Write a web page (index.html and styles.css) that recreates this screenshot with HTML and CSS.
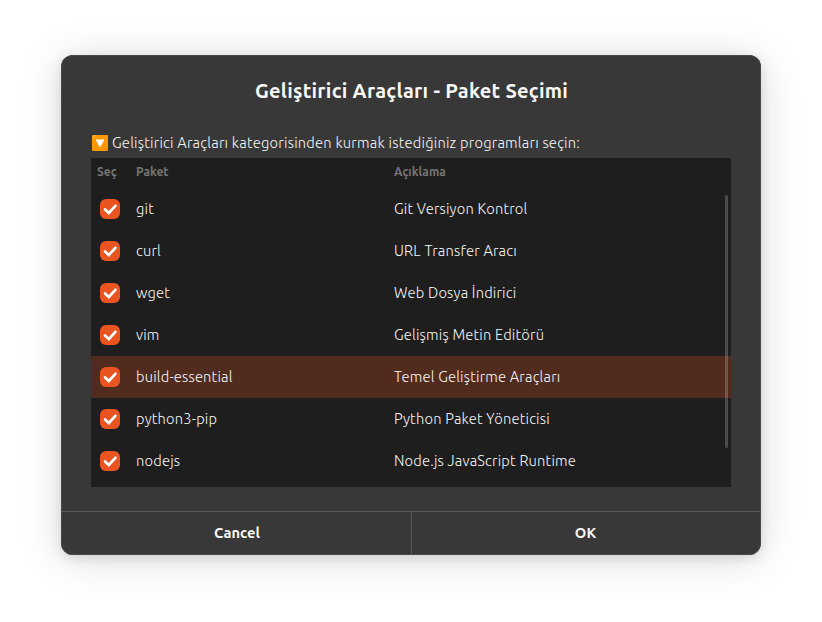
FILE: index.html
```html
<!DOCTYPE html>
<html lang="tr">
<head>
<meta charset="utf-8">
<title>Geliştirici Araçları - Paket Seçimi</title>
<link rel="stylesheet" href="styles.css">
</head>
<body>
<svg class="symbols" aria-hidden="true">
  <symbol id="check" viewBox="0 0 20 20"><path d="M5 10.5 8.8 14 15.4 6.8" fill="none" stroke="#fff" stroke-width="2.7" stroke-linecap="round" stroke-linejoin="miter"/></symbol>
</svg>
<main class="dialog">
  <h1 class="title"><span>Geliştirici Araçları - Paket Seçimi</span></h1>
  <section class="content">
    <p class="prompt">
      <svg class="down" viewBox="0 0 17 17"><rect x="1" width="16" height="16" rx="1" fill="#ff9800"/><path d="M2 4V2.2Q2 1 3.2 1H5.5" fill="none" stroke="#ffbd52" stroke-width="1"/><path d="M4.5 4.6h9L9 12.6z" fill="#fff"/></svg>
      <span>Geliştirici Araçları kategorisinden kurmak istediğiniz programları seçin:</span>
    </p>
    <div class="list">
      <div class="row head"><span>Seç</span><span>Paket</span><span>Açıklama</span></div>
      <div class="row"><svg class="check"><use href="#check"/></svg><span>git</span><span>Git Versiyon Kontrol</span></div>
      <div class="row"><svg class="check"><use href="#check"/></svg><span>curl</span><span>URL Transfer Aracı</span></div>
      <div class="row"><svg class="check"><use href="#check"/></svg><span>wget</span><span>Web Dosya İndirici</span></div>
      <div class="row"><svg class="check"><use href="#check"/></svg><span>vim</span><span>Gelişmiş Metin Editörü</span></div>
      <div class="row selected"><svg class="check"><use href="#check"/></svg><span>build-essential</span><span>Temel Geliştirme Araçları</span></div>
      <div class="row"><svg class="check"><use href="#check"/></svg><span>python3-pip</span><span>Python Paket Yöneticisi</span></div>
      <div class="row"><svg class="check"><use href="#check"/></svg><span>nodejs</span><span>Node.js JavaScript Runtime</span></div>
      <div class="scrollbar"></div>
    </div>
  </section>
  <footer class="actions"><button>Cancel</button><button>OK</button></footer>
</main>
</body>
</html>
```
FILE: styles.css
```css
* { box-sizing: border-box; }
body {
  margin: 0;
  padding: 55px 61px;
  background: #fff;
  color: #f7f7f7;
  font: 300 14.667px/20px Ubuntu, "Noto Sans", sans-serif;
}
.symbols { display: none; }
.dialog {
  display: flex;
  flex-direction: column;
  width: 700px;
  height: 500px;
  border-radius: 12px;
  background: #383838;
  box-shadow: inset 0 0 0 1px #484848, 0 3px 12px rgba(0,0,0,.12), 0 4px 44px rgba(0,0,0,.14);
}
.title {
  margin: 0;
  height: 78px;
  padding: 22px 0 0 1px;
  text-align: center;
  font-size: 20px;
  line-height: 28px;
  font-weight: 700;
  letter-spacing: .26px;
}
.content { flex: 1; padding: 0 30px; }
.prompt {
  display: flex;
  align-items: center;
  gap: 4px;
  height: 25px;
  margin: 0;
  padding: 0 0 5px 0;
  white-space: nowrap;
  letter-spacing: .235px;
}
.down { width: 17px; height: 17px; margin-top: 1px; }
.list {
  position: relative;
  height: 329px;
  background: #1e1e1e;
  overflow: hidden;
}
.row {
  display: grid;
  grid-template-columns: 45px 258px 1fr;
  align-items: center;
  height: 42px;
  white-space: nowrap;
  letter-spacing: .2px;
}
.row.head {
  height: 30px;
  padding-bottom: 3px;
  color: #747474;
  font-size: 12px;
  font-weight: 600;
  letter-spacing: .05px;
}
.head span:first-child { padding-left: 6px; }
.selected { background: #522b1f; }
.check {
  width: 20px;
  height: 20px;
  margin-left: 9px;
  border-radius: 6px;
  background: #e95420;
}
.scrollbar {
  position: absolute;
  top: 37px;
  right: 3px;
  width: 3px;
  height: 253px;
  border-radius: 2px;
  background: rgba(255,255,255,.2);
}
.actions {
  display: grid;
  grid-template-columns: 1fr 1fr;
  height: 44px;
  border-top: 1px solid #575757;
}
.actions button {
  padding: 0 0 1px 2px;
  border: 0;
  background: none;
  color: inherit;
  font: inherit;
  font-weight: 600;
}
.actions button + button { padding: 0 2px 1px 0; border-left: 1px solid #575757; }
```
